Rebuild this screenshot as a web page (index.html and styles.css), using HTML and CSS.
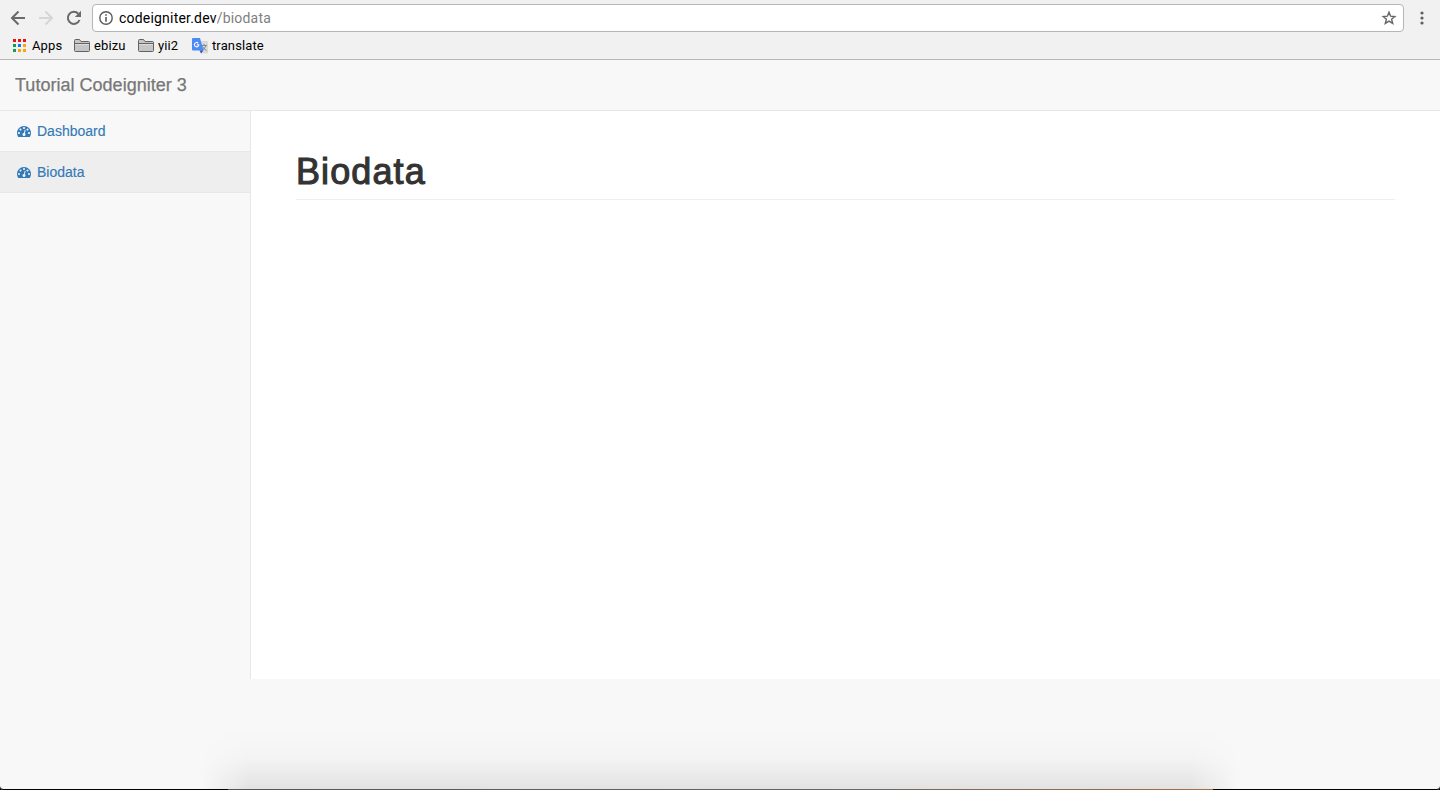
FILE: index.html
```html
<!DOCTYPE html>
<html lang="en">
<head>
<meta charset="utf-8">
<title>Biodata</title>
<link rel="stylesheet" href="styles.css">
</head>
<body>
<svg class="defs" width="0" height="0">
  <symbol id="folder" viewBox="0 0 16 13">
    <path d="M.5 11.5V1.5Q.5.5 1.5.5H5.500L7 2.500H14.500Q15.500 2.500 15.500 3.500V11.500Q15.500 12.500 14.500 12.500H1.500Q.5 12.500 .5 11.500Z" fill="#c6c6c6" stroke="#626262"/>
    <path d="M1 4.500H15" stroke="#626262"/>
    <path d="M1 5.500H15" stroke="#dedede"/>
  </symbol>
  <symbol id="gauge" viewBox="0 0 1792 1536">
    <path fill="#337ab7" fill-rule="evenodd" d="M384 896q0-53-37.500-90.500T256 768t-90.500 37.500T128 896t37.500 90.500T256 1024t90.500-37.500T384 896zM576 448q0-53-37.500-90.500T448 320t-90.500 37.500T320 448t37.500 90.500T448 576t90.500-37.500T576 448zM1004 929l101-382q6-26-7.500-48.500T1060 469t-48 6.500T982 514L881 896q-60 5-107 43.500T711 1038q-20 77 20 146t117 89 146-20 89-117q16-60-6-117t-73-90zM1664 896q0-53-37.500-90.500T1536 768t-90.500 37.500T1408 896t37.500 90.500T1536 1024t90.500-37.500T1664 896zM1024 256q0-53-37.500-90.500T896 128t-90.500 37.500T768 256t37.500 90.500T896 384t90.500-37.500T1024 256zM1472 448q0-53-37.500-90.500T1344 320t-90.500 37.500T1216 448t37.500 90.500T1344 576t90.500-37.500T1472 448zM1792 896q0 261-141 483-19 29-54 29H195q-35 0-54-29Q0 1158 0 896q0-182 71-348t191-286T548 71 896 0t348 71 286 191 191 286 71 348z"/>
  </symbol>
</svg>
<div class="browser">
  <div class="toolbar">
    <svg class="nav-icon" width="16" height="16" viewBox="0 0 16 16"><path d="M15 8H2M8.500 1.500L2 8L8.500 14.500" fill="none" stroke="#6a6a6a" stroke-width="2"/></svg>
    <svg class="nav-icon" width="16" height="16" viewBox="0 0 16 16"><path d="M1 8H14M7.500 1.500L14 8L7.500 14.500" fill="none" stroke="#d6d6d6" stroke-width="2"/></svg>
    <svg class="nav-icon" width="16" height="16" viewBox="0 0 16 16"><path d="M13.500 10A6 6 0 1 1 12.300 3.800" fill="none" stroke="#6a6a6a" stroke-width="2"/><path d="M15 .8V7H8.800Z" fill="#6a6a6a"/></svg>
    <div class="address">
      <svg width="14" height="14" viewBox="0 0 14 14"><circle cx="7" cy="7" r="6.200" fill="none" stroke="#5a5a5a" stroke-width="1.400"/><path d="M7 3.200V4.700M7 6V10.800" stroke="#5a5a5a" stroke-width="1.600"/></svg>
      <span class="url"><span class="host">codeigniter.dev</span><span class="path">/biodata</span></span>
      <svg class="star" width="16" height="16" viewBox="0 0 16 16"><path d="M8 2.200L9.600 6.200L13.800 6.500L10.600 9.200L11.700 13.400L8 11.100L4.300 13.400L5.400 9.200L2.200 6.500L6.400 6.200Z" fill="none" stroke="#666" stroke-width="1.400"/></svg>
    </div>
    <svg class="menu" width="4" height="14" viewBox="0 0 4 14"><g fill="#5f5f5f"><circle cx="2" cy="2" r="1.600"/><circle cx="2" cy="7" r="1.600"/><circle cx="2" cy="12" r="1.600"/></g></svg>
  </div>
  <div class="bookmarks">
    <a class="bookmark apps"><svg width="13" height="13" viewBox="0 0 13 13"><path d="M0 0h3v3H0zM5 0h3v3H5zM10 0h3v3H10z" fill="#ee1111"/><path d="M0 5h3v3H0zM0 10h3v3H0z" fill="#149c55"/><path d="M5 5h3v3H5z" fill="#0a7cf5"/><path d="M10 5h3v3H10zM5 10h3v3H5zM10 10h3v3H10z" fill="#fba50a"/></svg><span>Apps</span></a>
    <a class="bookmark ebizu"><svg width="16" height="13"><use href="#folder"/></svg><span>ebizu</span></a>
    <a class="bookmark yii"><svg width="16" height="13"><use href="#folder"/></svg><span>yii2</span></a>
    <a class="bookmark translate"><svg width="16" height="16" viewBox="0 0 16 16"><path d="M6 3H15Q16 3 16 4V14.500Q16 15.500 15 15.500H9Z" fill="#d9d9d9"/><path d="M9 7.500H15M12 6V7.500M14 7.500Q13 11 9.500 12.500M10.500 8.500Q12 11.500 14.500 12.500" fill="none" stroke="#7f8b91"/><path d="M1 0H8L11.500 12.500H1Q0 12.500 0 11.500V1Q0 0 1 0Z" fill="#4c8bf5"/><path d="M7.500 12.500H11.500L9 15.500Z" fill="#3455c8"/><path d="M6.200 5.100A2.200 2.200 0 1 0 6.800 6.800H4.800" fill="none" stroke="#fff" stroke-width="1.100"/></svg><span>translate</span></a>
  </div>
</div>
<header class="navbar"><a class="brand">Tutorial Codeigniter 3</a></header>
<div class="wrapper">
  <nav class="sidebar">
    <a class="item"><svg width="14" height="12"><use href="#gauge"/></svg><span>Dashboard</span></a>
    <a class="item active"><svg width="14" height="12"><use href="#gauge"/></svg><span>Biodata</span></a>
  </nav>
  <main class="page"><h1>Biodata</h1></main>
</div>
<div class="dock-shadow"></div>
<div class="desktop-edge"></div>
</body>
</html>
```
FILE: styles.css
```css
* { box-sizing: border-box; }
body { margin: 0; height: 790px; overflow: hidden; position: relative; background: #f8f8f8; font-family: "Liberation Sans", Arial, sans-serif; font-size: 14px; }
svg { display: block; flex: none; }
.defs { position: absolute; }
.browser { height: 60px; background: #f1f1f1; border-bottom: 1px solid #b6b6b6; font-family: Roboto, sans-serif; }
.toolbar { display: flex; align-items: center; height: 36px; padding-left: 10px; }
.nav-icon { margin-right: 12px; }
.address { display: flex; align-items: center; width: 1312px; height: 28px; margin-left: -2px; padding: 0 6px; border: 1px solid #b5b5b5; border-radius: 4px; background: #fff; }
.url { margin-left: 6px; font-size: 14px; letter-spacing: .2px; line-height: 20px; }
.host { color: #000; }
.path { color: #808080; }
.star { margin-left: auto; }
.menu { margin-left: 16px; }
.bookmarks { display: flex; height: 20px; padding-left: 13px; font-size: 13px; color: #000; }
.bookmark { display: flex; align-items: center; gap: 4px; height: 19px; line-height: 15px; letter-spacing: .12px; }
.bookmark span { margin-bottom: 1px; }
.apps { width: 61px; gap: 6px; }
.ebizu { width: 64px; }
.yii { width: 54px; }
.navbar { display: flex; align-items: center; height: 51px; padding: 1px 15px 0; border-bottom: 1px solid #e7e7e7; }
.brand { color: #777; font-size: 18px; letter-spacing: .02px; -webkit-text-stroke: .25px #777; }
.wrapper { display: flex; height: 568px; }
.sidebar { width: 250px; }
.item { display: flex; align-items: center; gap: 6px; height: 41px; padding-left: 17px; border-bottom: 1px solid #e7e7e7; color: #337ab7; }
.item svg { margin-top: 2px; }
.item span { -webkit-text-stroke: .15px #337ab7; }
.active { background: #eee; }
.page { flex: 1; padding: 39px 45px 0; border-left: 1px solid #e7e7e7; background: #fff; }
h1 { height: 50px; margin: 0; border-bottom: 1px solid #eee; color: #333; font-size: 36px; font-weight: 400; line-height: 43px; letter-spacing: 1.1px; -webkit-text-stroke: 1.1px #333; }
.dock-shadow { position: absolute; left: 0; right: 0; bottom: 0; height: 60px; background: linear-gradient(rgba(0,0,0,0), rgba(0,0,0,.015) 45%, rgba(0,0,0,.085)); -webkit-mask-image: linear-gradient(90deg, transparent 200px, #000 250px, #000 1190px, transparent 1240px); mask-image: linear-gradient(90deg, transparent 200px, #000 250px, #000 1190px, transparent 1240px); }
.desktop-edge { position: absolute; left: 0; right: 0; bottom: 0; height: 5px; border-bottom: 1px solid #000; border-radius: 0 0 4px 4px; box-shadow: 0 3px 0 2px #000; clip-path: inset(0); }
.desktop-edge::after { content: ""; position: absolute; left: 228px; bottom: -1px; width: 985px; height: 1px; background: linear-gradient(90deg, #555, #666 60%, #a66e47); }
```
